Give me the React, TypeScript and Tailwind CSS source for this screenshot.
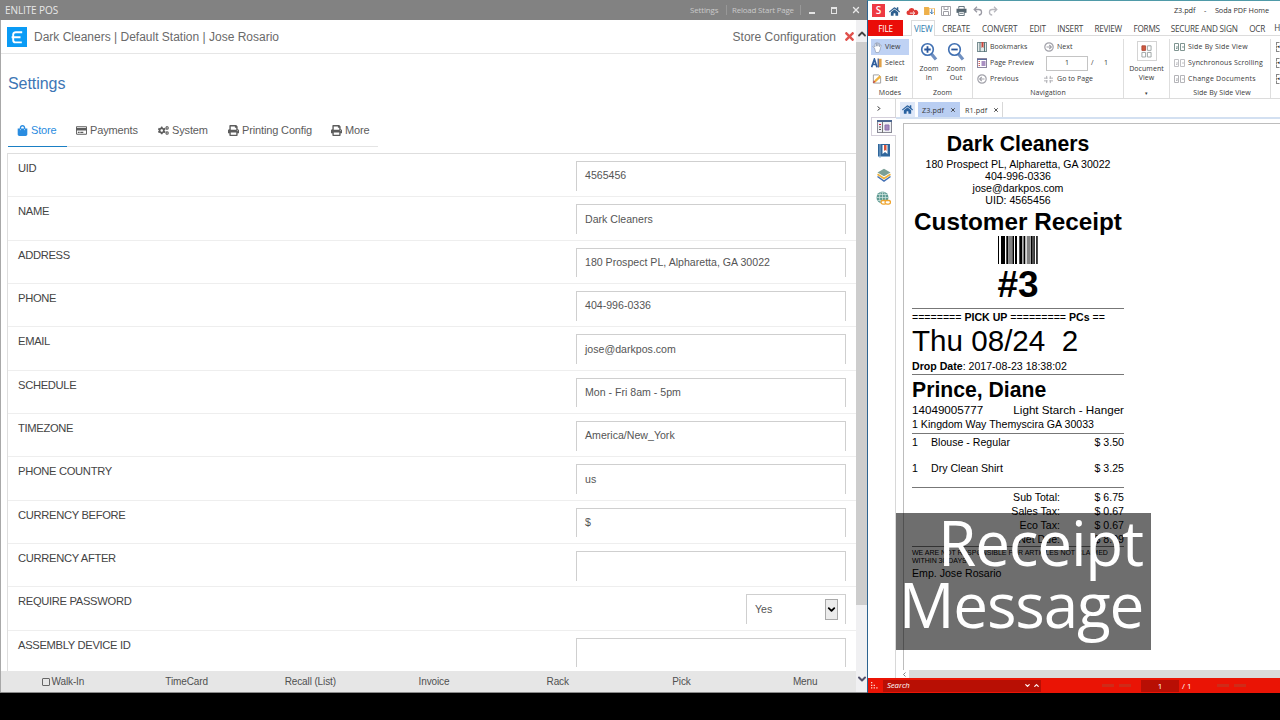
import type { ReactNode } from 'react';
import { FaCogs, FaPrint, FaRegCreditCard, FaShoppingBag, FaTimes, FaHome } from 'react-icons/fa';
import { ChevronDown, ChevronUp, X } from 'lucide-react';

const storeFields = [
  { label: 'UID', value: '4565456' },
  { label: 'NAME', value: 'Dark Cleaners' },
  { label: 'ADDRESS', value: '180 Prospect PL, Alpharetta, GA 30022' },
  { label: 'PHONE', value: '404-996-0336' },
  { label: 'EMAIL', value: 'jose@darkpos.com' },
  { label: 'SCHEDULE', value: 'Mon - Fri 8am - 5pm' },
  { label: 'TIMEZONE', value: 'America/New_York' },
  { label: 'PHONE COUNTRY', value: 'us' },
  { label: 'CURRENCY BEFORE', value: '$' },
  { label: 'CURRENCY AFTER', value: '' },
  { label: 'REQUIRE PASSWORD', value: 'Yes', select: true },
  { label: 'ASSEMBLY DEVICE ID', value: '' },
];

const settingsTabs = [
  { icon: FaShoppingBag, label: 'Store', width: 'w-[59px]', active: true },
  { icon: FaRegCreditCard, label: 'Payments', width: 'w-[82px]' },
  { icon: FaCogs, label: 'System', width: 'w-[70px]' },
  { icon: FaPrint, label: 'Printing Config', width: 'w-[103px]' },
  { icon: FaPrint, label: 'More', width: 'w-[56px]' },
];

const footerItems = ['Walk-In', 'TimeCard', 'Recall (List)', 'Invoice', 'Rack', 'Pick', 'Menu'];

const menuTabs = [
  { label: 'VIEW', width: 'w-[24px]', active: true },
  { label: 'CREATE', width: 'w-[42px]' },
  { label: 'CONVERT', width: 'w-[45px]' },
  { label: 'EDIT', width: 'w-[31px]' },
  { label: 'INSERT', width: 'w-[34px]' },
  { label: 'REVIEW', width: 'w-[42px]' },
  { label: 'FORMS', width: 'w-[35px]' },
  { label: 'SECURE AND SIGN', width: 'w-[80px]' },
  { label: 'OCR', width: 'w-[26px]' },
];

const totals = [
  ['Sub Total:', '$ 6.75'],
  ['Sales Tax:', '$ 0.67'],
  ['Eco Tax:', '$ 0.67'],
  ['Net Due:', '$ 8.09'],
];

/* ---------- POS window ---------- */

const TitleBar = () => (
  <div className="flex h-5 items-center bg-[#828282] pl-[5px] font-['Open_Sans',sans-serif] text-[#e8e8e8]">
    <span className="mt-px text-[10px] tracking-[-0.1px]">ENLITE POS</span>
    <div className="mt-px ml-auto flex items-center text-[7.9px] text-[#cacaca]">
      <span className="w-[36px] tracking-[-0.1px]">Settings</span>
      <span className="h-2.5 w-px bg-[#989898]" />
      <span className="ml-[5px] w-[68px] tracking-[-0.17px] whitespace-nowrap">Reload Start Page</span>
      <span className="h-2.5 w-px bg-[#989898]" />
    </div>
    <span className="mt-[5px] ml-2 h-0.5 w-[6px] bg-[#e4e4e4]" />
    <span className="ml-[16px] h-[7px] w-[6px] border border-t-2 border-[#e4e4e4]" />
    <X className="mr-[6px] ml-[14px] size-[10px]" strokeWidth={3.2} />
  </div>
);

const PosHeader = () => (
  <div className="flex h-[34px] shrink-0 items-center border-b border-[#e6e6e6] pl-[6px] text-[12px] text-[#6a6a6a]">
    <svg viewBox="0 0 20 20" className="size-5">
      <rect width="20" height="20" fill="#0a9bf5" />
      <path d="M15.2 5.2H8.800Q6.600 5.200 6.200 7.200V13Q6.200 15.400 8.300 15.400H14.800M4.600 10.200H13.500" fill="none" stroke="#fff" strokeWidth="1.900" />
    </svg>
    <span className="ml-[7px]">Dark Cleaners | Default Station | Jose Rosario</span>
    <span className="ml-auto">Store Configuration</span>
    <FaTimes className="ml-[7px] size-[13px] text-[#e0514c]" />
  </div>
);

const SettingsTabs = () => (
  <div className="flex h-[29px]">
    {settingsTabs.map((tab) => (
      <div
        key={tab.label}
        className={`flex items-start gap-[3px] pt-[6px] pl-[9px] text-[11px] leading-[13px] tracking-[-0.14px] whitespace-nowrap ${tab.width} ${
          tab.active ? 'border-b border-[#1a7fc4] text-[#2a8ce0]' : 'border-b border-[#e4e4e4] text-[#5c5c5c]'
        }`}
      >
        <tab.icon className="mt-px size-[11px] shrink-0" />
        <span>{tab.label}</span>
      </div>
    ))}
  </div>
);

const FieldRow = ({ label, value, select }: { label: string; value: string; select?: boolean }) => (
  <div className="flex h-[43.35px] shrink-0 justify-between border-b border-[#eeeeee] pt-[7px] pr-[10px] pl-[10px]">
    <span className="text-[11.2px] leading-[15px] tracking-[-0.32px] text-[#444]">{label}</span>
    <div
      className={`flex h-[29.500px] items-center justify-between border-x border-t border-[#cfcfcf] pl-[8px] text-[10.600px] text-[#555] ${
        select ? 'w-[100px]' : 'w-[270px]'
      }`}
    >
      <span>{value}</span>
      {select && (
        <span className="mr-[7px] flex h-[21px] w-[13px] items-center justify-center border border-[#a9a9a9] bg-[#ececec]">
          <ChevronDown className="size-[11px] shrink-0 text-black" strokeWidth={4} />
        </span>
      )}
    </div>
  </div>
);

const PosScrollbar = () => (
  <div className="flex w-[11px] flex-col items-center bg-[#f0f0f2]">
    <div className="flex h-[22px] items-center pt-1.5">
      <ChevronUp className="size-[12px] text-[#444]" strokeWidth={3.6} />
    </div>
    <div className="h-[563px] w-full bg-[#cdcdcd]" />
    <ChevronDown className="mt-auto mb-[7px] size-[12px] text-[#50506a]" strokeWidth={4} />
  </div>
);

const PosWindow = () => (
  <div className="flex h-[693px] w-[867px] shrink-0 flex-col border-b border-[#8a8a8a] bg-white font-['Liberation_Sans',sans-serif]">
    <TitleBar />
    <div className="flex min-h-0 flex-1 border-l border-[#a8a8a8]">
      <div className="flex w-[855px] flex-col overflow-hidden">
        <PosHeader />
        <div className="flex min-h-0 flex-1 flex-col overflow-hidden pl-[6px]">
          <h1 className="mt-[20px] pl-px text-[16px] leading-5 tracking-[-0.05px] text-[#3d76b5]">Settings</h1>
          <div className="mt-[24px] pl-px">
            <SettingsTabs />
          </div>
          <div className="mt-[6px] border-t border-l border-[#dedede]">
            {storeFields.map((field) => (
              <FieldRow key={field.label} {...field} />
            ))}
          </div>
        </div>
        <div className="flex h-[21px] w-[866px] shrink-0 bg-[#e6e6e6] text-[10px] tracking-[-0.12px] text-[#505050]">
          {footerItems.map((item, i) => (
            <div key={item} className="flex flex-1 items-center justify-center gap-[2px]">
              {i === 0 && <span className="size-[8px] rounded-[1px] border border-[#666]" />}
              <span>{item}</span>
            </div>
          ))}
        </div>
      </div>
      <PosScrollbar />
    </div>
  </div>
);

/* ---------- PDF window ---------- */

const Cloud = () => (
  <svg viewBox="0 0 14 10" className="h-[9px] w-[13px]">
    <path d="M3 9a2.5 2.5 0 0 1-.3-5A3.2 3.2 0 0 1 6 1.2c1.700 0 2.700 1 3.100 2.300A2.800 2.800 0 0 1 11.500 9z" fill="#e03a35" />
    <path d="M4 6.800h5M7.500 4.800l2 2-2 2" stroke="#fff" fill="none" />
  </svg>
);

const Folder = () => (
  <svg viewBox="0 0 12 11" className="h-[10px] w-[11px]">
    <path d="M0 1h5l1 1.500h6V10H0z" fill="#eeb04a" />
    <rect x="6" y="3" width="5" height="7" fill="#fff" />
    <path d="M8.500 3.500v5M6.700 6.800l1.800 1.800 1.800-1.800" stroke="#2f6da8" fill="none" />
  </svg>
);

const Floppy = () => (
  <svg viewBox="0 0 10 10" className="size-[10px]" fill="none" stroke="#a0a0a6">
    <path d="M.5.5h9v9h-9zM3 .5v3h4v-3M2.500 9.500v-4h5v4" />
  </svg>
);

const Printer = () => (
  <svg viewBox="0 0 12 11" className="h-[10px] w-[11px]">
    <path d="M3 3V.5h6V3" fill="#fff" stroke="#54646f" />
    <rect x=".5" y="3" width="11" height="4.500" fill="#54646f" />
    <path d="M3 6h6v4.500H3zM4 8h4" fill="#fff" stroke="#54646f" />
  </svg>
);

const UndoArrow = ({ redo }: { redo?: boolean }) => (
  <svg viewBox="0 0 10 10" className={`size-[10px] ${redo ? '-scale-x-100 text-[#b8b8be]' : 'text-[#9a9aa4]'}`}>
    <path d="M4 .8L1.200 3.500 4 6.200M1.500 3.500h4.300a2.700 2.700 0 0 1 0 5.500" fill="none" stroke="currentColor" strokeWidth="1.300" />
  </svg>
);

const PdfTitleBar = () => (
  <div className="flex h-[19px] shrink-0 items-center pl-[4px] text-[7.300px] text-[#333]">
    <span className="flex size-[13px] items-center justify-center bg-[#ee3a43] text-[10px] font-semibold text-white">S</span>
    <div className="ml-[4px] flex items-center gap-[5.500px] pt-px">
      <FaHome className="size-[11px] text-[#2d5f8f]" />
      <Cloud />
      <Folder />
      <Floppy />
      <Printer />
      <UndoArrow />
      <UndoArrow redo />
    </div>
    <div className="mr-[11px] ml-auto flex">
      <span className="w-[30px]">Z3.pdf</span>
      <span className="w-[11px]">-</span>
      <span className="tracking-[-0.05px]">Soda PDF Home</span>
    </div>
  </div>
);

const MenuBar = () => (
  <div className="flex h-[16px] shrink-0 text-[8.200px] leading-[15px] tracking-[-0.22px] text-[#444]">
    <div className="flex w-[36px] items-center justify-center bg-[#ea0d08] text-white">FILE</div>
    <div className="flex flex-1 items-center border-b border-[#dcdcdc] pl-[8px]">
      {menuTabs.map((tab) => (
        <span
          key={tab.label}
          className={`flex h-[16px] items-center justify-center whitespace-nowrap ${tab.width} ${
            tab.active ? 'border-x border-t border-[#dcdcdc] bg-white text-[#2e7cae]' : 'pt-px'
          }`}
        >
          {tab.label}
        </span>
      ))}
      <span className="ml-[4px]">H</span>
    </div>
  </div>
);

const RibbonItem = ({ icon, children, active }: { icon: ReactNode; children: ReactNode; active?: boolean }) => (
  <div className={`flex h-4 items-center gap-[3px] whitespace-nowrap ${active ? 'bg-[#bfd2f4]' : ''}`}>
    <span className="flex w-[11px] shrink-0 justify-center">{icon}</span>
    <span>{children}</span>
  </div>
);

const RibbonGroup = ({ label, className, children }: { label: ReactNode; className: string; children: ReactNode }) => (
  <div className={`flex shrink-0 flex-col border-r border-[#dedede] ${className}`}>
    <div className="h-[50px]">{children}</div>
    <div className="pt-px text-center leading-[10px]">{label}</div>
  </div>
);

const HandIcon = () => (
  <svg viewBox="0 0 10 11" className="h-[11px] w-[10px]">
    <path d="M2.500 6L.8 4.800l.7-.8L3 5V1.500l1-.3.5 3V.6h1l.4 3.600L6.500 1l1 .3-.1 3.500.9-2 .9.4L8 8 6.800 10.500h-3z" fill="#fff" stroke="#8590a8" strokeWidth=".6" />
  </svg>
);

const SelectIcon = () => (
  <svg viewBox="0 0 11 10" className="h-[10px] w-[11px]">
    <path d="M.6 9.200L3.400 1.200 6 9.200M1.700 6.500h3.500" stroke="#2f5f9e" strokeWidth="1.700" fill="none" />
    <rect x="7.600" y=".8" width="3" height="8.400" fill="#e0a14a" />
    <path d="M7.200.5v9" stroke="#3a4f86" strokeWidth="1.200" />
  </svg>
);

const EditIcon = () => (
  <svg viewBox="0 0 11 11" className="size-[10px]">
    <path d="M1.500 1h6l2 2v7h-8z" fill="#fff" stroke="#999" />
    <path d="M2 9.500l1-3L8.500 1.500l1.500 2L4 9z" fill="#efb23e" />
    <path d="M1 10l1-3 1.800 2z" fill="#c5443b" />
  </svg>
);

const Magnifier = ({ plus }: { plus?: boolean }) => (
  <svg viewBox="0 0 18 20" className="h-5 w-[18px]">
    <path d="M11.500 12l4.500 5.500" stroke="#6f8fc0" strokeWidth="3.200" />
    <circle cx="7.500" cy="7.500" r="5.800" fill="#fff" stroke="#3f6fb2" strokeWidth="1.600" />
    <path d={plus ? 'M4.300 7.500h6.400M7.500 4.300v6.400' : 'M4.300 7.500h6.400'} stroke="#28559a" strokeWidth="1.800" />
  </svg>
);

const BookmarksIcon = () => (
  <svg viewBox="0 0 10 10" className="size-[10px]">
    <rect x=".5" y=".5" width="9" height="9" fill="#e3eae9" stroke="#7a8f93" />
    <path d="M3 0v10M7.500 0v10" stroke="#54757a" />
    <path d="M4.500 0h2v6l-1-1-1 1z" fill="#c9463d" />
  </svg>
);

const PreviewIcon = () => (
  <svg viewBox="0 0 10 10" className="size-[10px]">
    <rect x=".5" y=".5" width="9" height="9" fill="#fff" stroke="#8d86a0" />
    <path d="M0 1.500h10" stroke="#5b6b9a" />
    <path d="M1.500 3.500h1.500M1.500 5.500h1.500M1.500 7.500h1.500" stroke="#d0605a" />
    <rect x="4.500" y="3" width="4" height="5" fill="#a98fc2" />
  </svg>
);

const CircleArrow = ({ left }: { left?: boolean }) => (
  <svg viewBox="0 0 10 10" className="size-[10px]" fill="none" stroke="#a2a2aa">
    <circle cx="5" cy="5" r="4.200" strokeWidth="1.200" />
    <path d={left ? 'M7.500 5h-5M4.700 3L2.700 5l2 2' : 'M2.500 5h5M5.300 3l2 2-2 2'} strokeWidth="1.200" />
  </svg>
);

const PagesIcon = ({ color = '#7f9591' }: { color?: string }) => (
  <svg viewBox="0 0 11 8" className="h-[8px] w-[11px]" fill="none" stroke={color}>
    <path d="M.5.5h4v7h-4zM6.500.5h4v7h-4zM2 4h2M8 4h2M2 5.500h1.500" />
  </svg>
);

const GoToIcon = () => (
  <svg viewBox="0 0 10 10" className="size-[9px]" fill="none" stroke="#a8a8ae">
    <path d="M3 1v3M7 1v3M3 6v3M7 6v3M0 3.500h4M6 3.500h4M0 6.500h4M6 6.500h4" />
  </svg>
);

const DocViewIcon = () => (
  <svg viewBox="0 0 12 14" className="h-[13px] w-[11px]" fill="#fff" stroke="#9aa2a2">
    <path d="M1 .8h4v5H1z" fill="#cf5a40" stroke="#b04a38" />
    <path d="M7 .8h4v5H7zM1 8h4v5H1zM7 8h4v5H7z" />
  </svg>
);

const Ribbon = () => (
  <div className="flex h-[63px] shrink-0 overflow-hidden border-b border-[#dcdcdc] pt-[3px] text-[7px] tracking-[0.06px] text-[#383838]">
    <RibbonGroup label="Modes" className="w-[45px] pr-[3px] pl-[3px]">
      <RibbonItem icon={<HandIcon />} active>View</RibbonItem>
      <RibbonItem icon={<SelectIcon />}>Select</RibbonItem>
      <RibbonItem icon={<EditIcon />}>Edit</RibbonItem>
    </RibbonGroup>
    <RibbonGroup label="Zoom" className="w-[60px]">
      <div className="flex justify-center gap-[7px] pt-[3px] text-center leading-[8.500px]">
        <div className="flex w-5 flex-col items-center">
          <Magnifier plus />
          <span className="mt-[3px]">Zoom<br />In</span>
        </div>
        <div className="flex w-5 flex-col items-center">
          <Magnifier />
          <span className="mt-[3px]">Zoom<br />Out</span>
        </div>
      </div>
    </RibbonGroup>
    <RibbonGroup label="Navigation" className="w-[151px]">
      <div className="flex pl-[3px]">
        <div className="w-[67px]">
          <RibbonItem icon={<BookmarksIcon />}>Bookmarks</RibbonItem>
          <RibbonItem icon={<PreviewIcon />}>Page Preview</RibbonItem>
          <RibbonItem icon={<CircleArrow left />}>Previous</RibbonItem>
        </div>
        <div>
          <RibbonItem icon={<CircleArrow />}>Next</RibbonItem>
          <div className="flex h-4 items-center pl-[3px]">
            <span className="flex h-[15px] w-[42px] items-center justify-center border border-[#c4c4c4]">1</span>
            <span className="ml-[3px] w-[13px]">/</span>
            <span>1</span>
          </div>
          <RibbonItem icon={<GoToIcon />}>Go to Page</RibbonItem>
        </div>
      </div>
    </RibbonGroup>
    <RibbonGroup label={<span className="text-[5px]">▾</span>} className="w-[46px]">
      <div className="flex flex-col items-center pt-[2px] text-center leading-[8.500px]">
        <span className="flex size-5 items-center justify-center border border-[#d4d4d4]">
          <DocViewIcon />
        </span>
        <span className="mt-[4px]">Document<br />View</span>
      </div>
    </RibbonGroup>
    <RibbonGroup label="Side By Side View" className="w-[101px] pl-[4px]">
      <RibbonItem icon={<PagesIcon />}><span className="tracking-[0.2px]">Side By Side View</span></RibbonItem>
      <RibbonItem icon={<PagesIcon color="#c0c0c4" />}><span className="tracking-[0.14px]">Synchronous Scrolling</span></RibbonItem>
      <RibbonItem icon={<PagesIcon color="#b4b4b8" />}><span className="tracking-[0.24px]">Change Documents</span></RibbonItem>
    </RibbonGroup>
    <div className="flex flex-col gap-[6px] pt-[3px] pl-[5px]">
      {[0, 1, 2].map((n) => (
        <span key={n} className="flex h-[10px] w-[10px] items-center border border-dashed border-[#888] text-[5px]">◂</span>
      ))}
    </div>
  </div>
);

const SideIcons = () => (
  <div className="flex w-[28px] shrink-0 flex-col items-center border-r border-[#d8d8d8] pl-[4px]">
    <div className="flex h-[18px] w-full items-center justify-center pr-[10px]">
      <svg viewBox="0 0 4 6" className="h-[5px] w-[4px]">
        <path d="M.5.5L3 3 .5 5.500" fill="none" stroke="#222" strokeWidth="1.200" />
      </svg>
    </div>
    <div className="-mr-px flex h-[19px] w-[25px] shrink-0 items-center justify-center self-end border border-r-0 border-[#d4cfda] bg-white">
      <svg viewBox="0 0 15 13" className="h-[13px] w-[15px]">
        <rect x=".5" y=".5" width="14" height="12" fill="#eef0f3" stroke="#8a8a96" />
        <path d="M0 1h15" stroke="#4a6690" strokeWidth="2" />
        <path d="M5.500 2v11" stroke="#777" />
        <path d="M2 4.500h2" stroke="#d14" />
        <path d="M2 7h2M2 9.500h2" stroke="#555" />
        <path d="M8 5h4v5H8z" fill="#a48bc0" stroke="#8d72ad" />
      </svg>
    </div>
    <svg viewBox="0 0 12 14" className="mt-[8px] h-[14px] w-[12px]">
      <rect width="12" height="13" fill="#2f669b" />
      <path d="M2 0v14M0 12.500h12" stroke="#8cb1d2" />
      <path d="M4.500 1h5v9l-2.500-2-2.500 2z" fill="#fff" />
      <path d="M6 1h2.500v6l-1.200-1L6 7z" fill="#d9553c" />
    </svg>
    <svg viewBox="0 0 14 14" className="mt-[10px] size-[14px]">
      <path d="M.5 8.500L7 13l6.500-4.500" stroke="#4470b4" strokeWidth="1.500" fill="none" />
      <path d="M.5 6.200L7 10.400l6.500-4.200" stroke="#efb33e" strokeWidth="1.700" fill="none" />
      <path d="M7 .8L13.500 4.500 7 8.200.5 4.500z" fill="#7ba096" />
    </svg>
    <svg viewBox="0 0 15 15" className="mt-[9px] size-[15px]">
      <circle cx="6.500" cy="6.500" r="6" fill="#5f9b93" />
      <path d="M.5 6.500h12M6.500.5v12M1.500 3.500h10M1.500 9.500h10" stroke="#d7e8e4" strokeWidth=".7" />
      <ellipse cx="6.500" cy="6.500" rx="3" ry="6" fill="none" stroke="#d7e8e4" strokeWidth=".7" />
      <rect x="5" y="9.500" width="5.500" height="3.600" rx="1.800" fill="#fff" stroke="#efa52e" strokeWidth="1.300" />
      <rect x="9" y="9.500" width="5.500" height="3.600" rx="1.800" fill="#fff" stroke="#efa52e" strokeWidth="1.300" />
    </svg>
  </div>
);

const DocumentTabs = () => (
  <div className="flex h-[20px] shrink-0 items-end border-b-2 border-[#d3e0f1] pl-[4px] text-[7.200px] text-[#383838]">
    <span className="flex h-[15px] w-[15px] items-center justify-center bg-[#dfe8f8]">
      <FaHome className="size-[11px] text-[#2a62a0]" />
    </span>
    <span className="ml-[3px] flex h-[15px] w-[42px] items-center bg-[#b9cef2] pl-[4px]">
      <span className="w-[28px] pt-px tracking-[0.1px]">Z3.pdf</span>
      <X className="mt-px size-[6px]" strokeWidth={3.500} />
    </span>
    <span className="flex h-[15px] w-[43px] items-center border-r border-[#d8d8d8] pl-[5px]">
      <span className="w-[28px] pt-px tracking-[0.1px]">R1.pdf</span>
      <X className="mt-px size-[6px]" strokeWidth={3.500} />
    </span>
  </div>
);

const Barcode = () => (
  <svg viewBox="0 0 40 28" className="mx-auto mt-px h-[28px] w-[40px]">
    <path d="M0 0h1v28H0zM3 0h4v28H3zM8.300 0h2v28h-2zM14.300 0h1.700v28h-1.700zM17 0h2v28h-2zM21.300 0h3v28h-3zM25.500 0h1.800v28h-1.800zM32.700 0h2v28h-2zM35.300 0h1.500v28h-1.500zM38.200 0h1.500v28h-1.500z" fill="#000" />
    <path d="M10.300 0h4v28h-4zM28.700 0h3.600v28h-3.600z" fill="#828282" />
  </svg>
);

const Rule = ({ className }: { className: string }) => <div className={`h-px bg-[#777] ${className}`} />;

const Receipt = () => (
  <div className="w-[212px] pt-[7px] font-['Liberation_Sans',sans-serif] text-[10.600px] leading-3 whitespace-nowrap text-black">
    <div className="text-center">
      <div className="text-[21.200px] leading-[26px] font-bold">Dark Cleaners</div>
      <div className="mt-px">180 Prospect PL, Alpharetta, GA 30022</div>
      <div>404-996-0336</div>
      <div>jose@darkpos.com</div>
      <div>UID: 4565456</div>
      <div className="mt-[3px] text-[24.300px] leading-[26px] font-bold">Customer Receipt</div>
      <Barcode />
      <div className="pt-px text-[37px] leading-[39px] font-bold">#3</div>
    </div>
    <Rule className="mt-[4px]" />
    <div className="mt-0.5">
      ======== <b>PICK UP</b> ========= <b>PCs</b> ==
    </div>
    <div className="text-[29.600px] leading-[36px]">Thu 08/24&nbsp; 2</div>
    <div className="mt-px">
      <b>Drop Date</b>: 2017-08-23 18:38:02
    </div>
    <Rule className="mt-0.5" />
    <div className="mt-0.5 text-[21.200px] leading-[26px] font-bold">Prince, Diane</div>
    <div className="mt-px flex justify-between text-[11.650px]">
      <span>14049005777</span>
      <span>Light Starch - Hanger</span>
    </div>
    <div className="mt-0.5">1 Kingdom Way Themyscira GA 30033</div>
    <Rule className="mt-[3px]" />
    <div className="mt-0.5 flex">
      <span className="w-[19px]">1</span>
      <span>Blouse - Regular</span>
      <span className="ml-auto">$ 3.50</span>
    </div>
    <div className="mt-[14px] flex">
      <span className="w-[19px]">1</span>
      <span>Dry Clean Shirt</span>
      <span className="ml-auto">$ 3.25</span>
    </div>
    <Rule className="mt-[13px]" />
    <div className="mt-0.5">
      {totals.map(([label, amount]) => (
        <div key={label} className="flex h-[14px] items-center">
          <span className="w-[148px] text-right">{label}</span>
          <span className="ml-auto">{amount}</span>
        </div>
      ))}
    </div>
    <Rule className="mt-0" />
    <div className="mt-0.5 text-[7px] leading-[8px] tracking-[-0.03px]">
      WE ARE NOT RESPONSIBLE FOR ARTICLES NOT CLAIMED
      <br />
      WITHIN 30 DAYS.
    </div>
    <div className="mt-0.5">Emp. Jose Rosario</div>
  </div>
);

const StatusBar = () => (
  <div className="flex h-[15px] shrink-0 items-center bg-[#ea1405] pl-[3px] text-[8px] text-white">
    <svg viewBox="0 0 8 8" className="size-[7px]" fill="#ffd9d0">
      <path d="M0 0h1.500v1.500H0zM0 3h1.500v1.500H0zM0 6h1.500v1.500H0zM3 3h1.500v1.500H3zM3 6h1.500v1.500H3zM6 6h1.500v1.500H6z" />
    </svg>
    <div className="ml-[5px] flex h-[12px] w-[158px] items-center bg-[#b80f04] pl-[4px]">
      <span className="text-[7.800px] tracking-[-0.1px] font-medium italic">Search</span>
      <ChevronDown className="ml-auto size-[7px]" strokeWidth={4} />
      <ChevronUp className="mr-[1px] ml-[2px] size-[7px]" strokeWidth={4} />
    </div>
    <div className="ml-[61px] flex gap-[5px]">
      <span className="h-[3px] w-[12px] bg-[#cf2b18]" />
      <span className="h-[3px] w-[12px] bg-[#cf2b18]" />
    </div>
    <span className="ml-[10px] flex h-[12px] w-[38px] items-center justify-center bg-[#b80f04]">1</span>
    <span className="ml-[3px]">/ 1</span>
    <div className="ml-[25px] flex gap-[5px]">
      <span className="h-[3px] w-[12px] bg-[#cf2b18]" />
      <span className="h-[3px] w-[12px] bg-[#cf2b18]" />
    </div>
  </div>
);

const PdfWindow = () => (
  <div className="flex h-[693px] w-[413px] shrink-0 flex-col overflow-hidden border-t border-l border-t-[#4f9aa8] border-l-[#2c6390] bg-white font-['Open_Sans',sans-serif]">
    <PdfTitleBar />
    <MenuBar />
    <Ribbon />
    <div className="flex min-h-0 flex-1">
      <SideIcons />
      <div className="flex min-w-0 flex-1 flex-col">
        <DocumentTabs />
        <div className="flex min-h-0 flex-1 flex-col pt-[4px] pl-[7px]">
          <div className="min-h-0 flex-1 border-t border-l border-[#bdbdbd] pl-[8px]">
            <Receipt />
          </div>
        </div>
        <div className="flex h-[8px] shrink-0 items-center bg-[#dadada]">
          <span className="flex h-full w-[13px] items-center justify-end bg-white pr-[3px]">
            <svg viewBox="0 0 3 5" className="h-[5px] w-[3px]">
              <path d="M2.500.5L.5 2.500l2 2" fill="none" stroke="#666" strokeWidth=".8" />
            </svg>
          </span>
        </div>
      </div>
    </div>
    <StatusBar />
  </div>
);

export default function App() {
  return (
    <div className="relative flex h-[720px] w-[1280px] overflow-hidden bg-black">
      <PosWindow />
      <PdfWindow />
      {/* Caption laid over the receipt */}
      <div className="absolute top-[513px] left-[896px] flex h-[137px] w-[255px] flex-col items-end bg-black/57 pr-[8px] font-['Open_Sans',sans-serif] text-[62px] leading-[62px] font-[480] whitespace-nowrap text-white">
        <span className="-mt-[2px] tracking-[-1.200px]">Receipt</span>
        <span className="tracking-[-1.200px]">Message</span>
      </div>
    </div>
  );
}
